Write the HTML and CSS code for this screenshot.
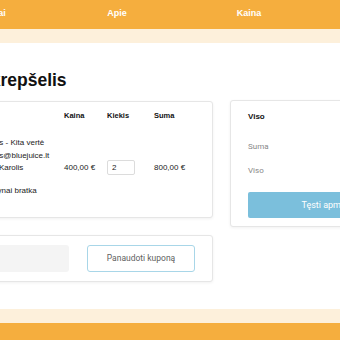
FILE: index.html
```html
<!DOCTYPE html>
<html lang="lt">
  <head>
    <meta charset="UTF-8" />
    <meta name="viewport" content="width=device-width, initial-scale=1.0" />
    <title>Krepšelis</title>
    <link rel="stylesheet" href="styles.css">
  </head>
  <body>
    <header class="topbar">
      <nav class="nav">
        <a href="#">Produktai</a>
        <a href="#">Apie</a>
        <a href="#">Kaina</a>
        <a href="#">Kontaktai</a>
      </nav>
    </header>
    <div class="subbar"></div>

    <main class="page">
      <h1 class="title">Jūsų krepšelis</h1>

      <div class="layout">
        <div class="cart-col">
          <section class="card cart">
            <div class="cart-head">
              <span>Prekė</span>
              <span>Kaina</span>
              <span>Kiekis</span>
              <span>Suma</span>
            </div>
            <div class="cart-row">
              <div class="product">
                <p>Paslaugos - Kita vertė</p>
                <p>savininkas@bluejuice.lt</p>
                <p>Pirkėjas: Karolis</p>
                <p class="note">Na, kaimynai bratka</p>
              </div>
              <div>400,00 €</div>
              <div><input class="qty" type="text" value="2" /></div>
              <div>800,00 €</div>
            </div>
          </section>

          <section class="card coupon">
            <input class="coupon-input" type="text" />
            <button class="coupon-btn">Panaudoti kuponą</button>
          </section>
        </div>

        <aside class="card summary">
          <h2 class="summary-title">Viso</h2>
          <div class="summary-line"><span>Suma</span><span>800,00 €</span></div>
          <div class="summary-line"><span>Viso</span><span>800,00 €</span></div>
          <button class="checkout">Tęsti apmokėjimą</button>
        </aside>
      </div>
    </main>

    <footer>
      <div class="subbar"></div>
      <div class="bottombar"></div>
    </footer>
  </body>
</html>
```

FILE: styles.css
```css
body {
  font-family: "Liberation Sans", Arial, sans-serif;
  margin: 0;
  padding: 0;
  color: #111;
  background: #fff;
  overflow: hidden;
}

.topbar {
  background: #f5ae3e;
  height: 29px;
}

.nav {
  display: flex;
  margin-left: -81px;
}

.nav a {
  width: 132px;
  flex-shrink: 0;
  text-align: center;
  line-height: 27px;
  font-size: 9px;
  font-weight: bold;
  color: #fff;
  text-decoration: none;
}

.subbar {
  background: #fdf0db;
  height: 14px;
}

.page {
  width: 499px;
  margin-left: -55px;
}

.title {
  font-size: 17.5px;
  line-height: 20px;
  margin: 27px 0 11px;
}

.layout {
  display: flex;
  gap: 17px;
  align-items: flex-start;
}

.cart-col {
  width: 268px;
  display: flex;
  flex-direction: column;
  gap: 17px;
}

.card {
  background: #fff;
  border: 1px solid #e6e6e6;
  border-radius: 3px;
  box-shadow: 0 1px 3px rgba(0, 0, 0, 0.06);
}

.cart {
  padding: 9px 20px 19px;
}

.cart-head,
.cart-row {
  display: grid;
  grid-template-columns: 98px 43px 47px 1fr;
  font-size: 8px;
}

.cart-head {
  font-size: 7.5px;
  font-weight: bold;
  line-height: 9px;
}

.cart-head span:first-child {
  visibility: hidden;
}

.cart-row {
  margin-top: 17px;
  align-items: center;
  color: #222;
}

.product p {
  margin: 0;
  line-height: 12.5px;
  white-space: nowrap;
}

.product .note {
  margin-top: 10.5px;
}

.qty {
  width: 28px;
  height: 15px;
  box-sizing: border-box;
  border: 1px solid #dcdcdc;
  border-radius: 2px;
  padding: 0 4px;
  font-family: inherit;
  font-size: 8px;
  color: #222;
  outline: none;
}

.coupon {
  display: flex;
  gap: 18px;
  padding: 9px 17px 9px 10px;
}

.coupon-input {
  width: 113px;
  height: 27px;
  box-sizing: border-box;
  border: none;
  border-radius: 3px;
  background: #f4f4f4;
}

.coupon-btn {
  width: 110px;
  height: 27px;
  border: 1.5px solid #a8d6e8;
  border-radius: 3px;
  background: #fff;
  font-family: Roboto, sans-serif;
  font-size: 8.5px;
  color: #5f5f5f;
  cursor: pointer;
}

.summary {
  width: 214px;
  box-sizing: border-box;
  margin-top: -1px;
  padding: 11px 17px 8px;
  font-family: Roboto, sans-serif;
}

.summary-title {
  font-family: "Liberation Sans", Arial, sans-serif;
  font-size: 8px;
  line-height: 10px;
  margin: 0 0 19px;
}

.summary-line {
  display: flex;
  justify-content: space-between;
  font-size: 8px;
  line-height: 12px;
  color: #888;
  margin-bottom: 12px;
}

.checkout {
  width: 100%;
  height: 26px;
  margin-top: 3px;
  border: none;
  border-radius: 2px;
  background: #7bbfdc;
  color: #fff;
  font-family: Roboto, sans-serif;
  font-size: 9px;
  cursor: pointer;
}

footer {
  margin-top: 27px;
}

.bottombar {
  background: #f5ae3e;
  height: 30px;
}
```
